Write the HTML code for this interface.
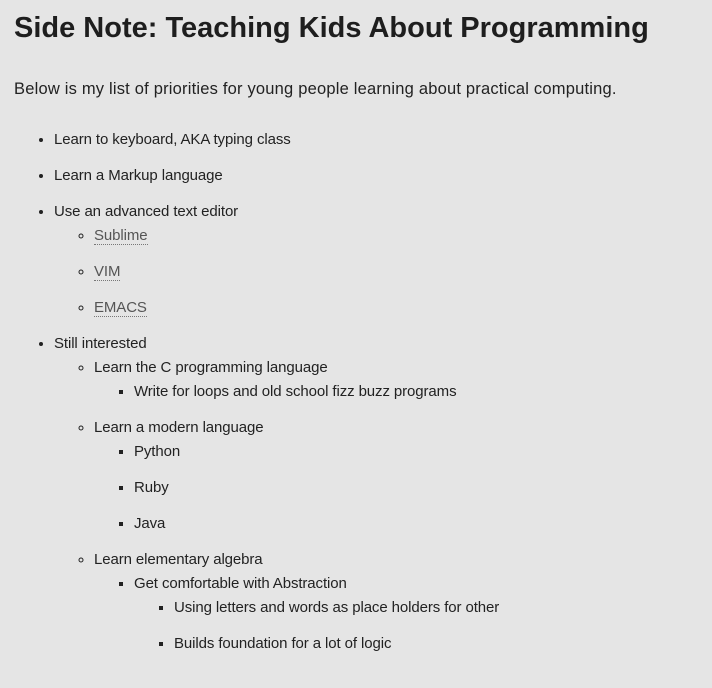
<!DOCTYPE html>
<html><head><style>
html,body{margin:0;background:#e5e5e5;}
body{padding:0 14px;font-family:"Liberation Sans",sans-serif;color:#222;}
h1{margin:0;padding-top:10px;font-size:29px;line-height:36px;font-weight:bold;letter-spacing:0px;color:#1e1e1e;}
p{margin:31px 0 0;font-size:16.5px;line-height:24px;letter-spacing:0.2px;}
ul{margin:0;padding-left:40px;font-size:15px;line-height:24px;letter-spacing:-0.1px;}
body>ul{margin-top:27px;}
li{margin-bottom:12px;}
ul ul{list-style:circle;}
ul ul ul{list-style:square;}
a{color:#555;text-decoration:none;border-bottom:1px dotted #777;}
</style></head><body>
<h1>Side Note: Teaching Kids About Programming</h1>
<p>Below is my list of priorities for young people learning about practical computing.</p>
<ul>
<li>Learn to keyboard, AKA typing class</li>
<li>Learn a Markup language</li>
<li>Use an advanced text editor
<ul><li><a>Sublime</a></li><li><a>VIM</a></li><li><a>EMACS</a></li></ul></li>
<li>Still interested
<ul>
<li>Learn the C programming language
<ul><li>Write for loops and old school fizz buzz programs</li></ul></li>
<li>Learn a modern language
<ul><li>Python</li><li>Ruby</li><li>Java</li></ul></li>
<li>Learn elementary algebra
<ul><li>Get comfortable with Abstraction
<ul><li>Using letters and words as place holders for other</li><li>Builds foundation for a lot of logic</li></ul></li></ul></li>
</ul></li>
</ul>
</body></html>
